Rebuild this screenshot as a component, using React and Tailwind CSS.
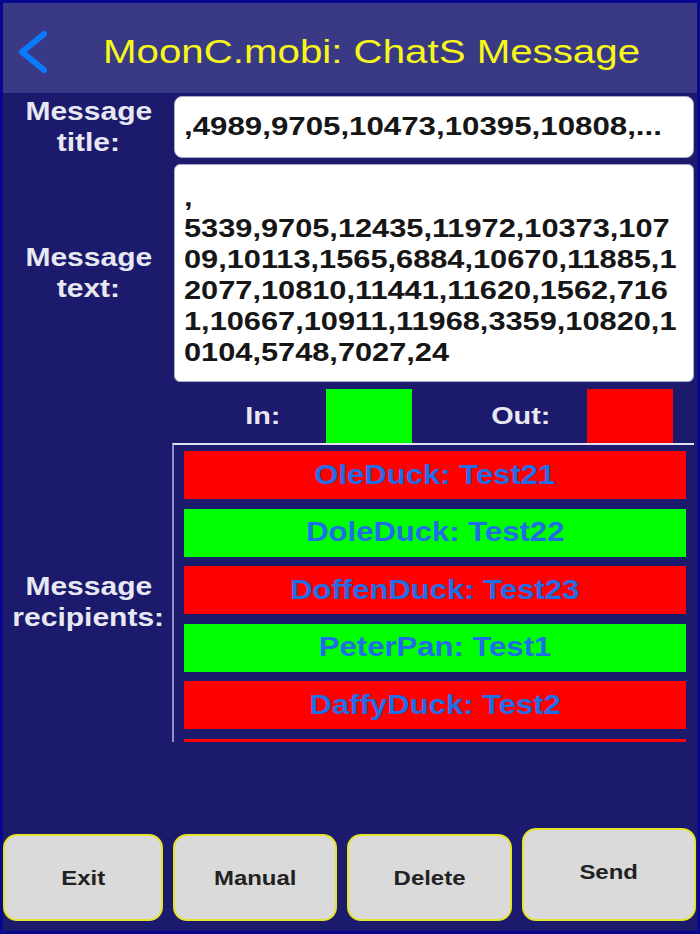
import React from 'react';

const MESSAGE_LINES = [
    ',',
    '5339,9705,12435,11972,10373,107',
    '09,10113,1565,6884,10670,11885,1',
    '2077,10810,11441,11620,1562,716',
    '1,10667,10911,11968,3359,10820,1',
    '0104,5748,7027,24',
];

const RECIPIENTS = [
    { name: 'OleDuck: Test21', out: true },
    { name: 'DoleDuck: Test22', out: false },
    { name: 'DoffenDuck: Test23', out: true },
    { name: 'PeterPan: Test1', out: false },
    { name: 'DaffyDuck: Test2', out: true },
    { name: 'MickeyMouse: Test3', out: true },
];

const BUTTONS = [
    { label: 'Exit', width: 'w-[160px]', height: 'h-[87px]' },
    { label: 'Manual', width: 'w-[164px]', height: 'h-[87px]' },
    { label: 'Delete', width: 'w-[165px]', height: 'h-[87px]' },
    { label: 'Send', width: 'w-[174px]', height: 'h-[93px] pb-[6px]' },
];

// the app was drawn on a narrow phone screen, so type reads a bit wide
const Label = ({ lines, className = '' }) => (
    <div className={`w-[171px] shrink-0 flex flex-col items-center justify-center text-[25px] leading-[31px] font-bold text-[#e8e8f2] text-center ${className}`}>
        {lines.map((l) => (
            <span key={l} className="block scale-x-[1.2] whitespace-nowrap">{l}</span>
        ))}
    </div>
);

const App = () => {
    return (
        <div
            className="w-[700px] h-[934px] flex flex-col bg-[#1b1a6c] border-[3px] border-[#08088e] overflow-hidden"
            style={{ fontFamily: '"Liberation Sans", Arial, sans-serif' }}
        >
            {/* nav bar */}
            <header className="h-[90px] shrink-0 bg-[#3a3985] flex items-center pl-[13px] pt-[8px]">
                <svg width="34" height="46" viewBox="0 0 34 46" className="shrink-0">
                    <polyline points="28,5 6,23 28,41" fill="none" stroke="#0a7bff" strokeWidth="6" strokeLinecap="round" strokeLinejoin="round" />
                </svg>
                <h1 className="ml-[53px] text-[33px] text-[#f7f71a] whitespace-nowrap inline-block scale-x-[1.22] origin-left">
                    MoonC.mobi: ChatS Message
                </h1>
            </header>

            <main className="flex flex-col pt-[3px] pr-[3px]">
                <div className="flex h-[62px]">
                    <Label lines={['Message', 'title:']} />
                    <div className="flex-1 bg-white rounded-[8px] border border-[#a9a9c0] flex items-center pl-[9px] overflow-hidden">
                        <span className="block text-[25px] font-bold text-[#161616] whitespace-nowrap scale-x-[1.25] origin-left">
                            ,4989,9705,10473,10395,10808,...
                        </span>
                    </div>
                </div>

                <div className="flex h-[218px] mt-[6px]">
                    <Label lines={['Message', 'text:']} />
                    <div className="flex-1 bg-white rounded-[6px] border border-[#a9a9c0] pt-[17px] pl-[9px] text-[25px] leading-[31px] font-bold text-[#161616] overflow-hidden">
                        {MESSAGE_LINES.map((line, i) => (
                            <div key={i} className="whitespace-nowrap scale-x-[1.23] origin-left">{line}</div>
                        ))}
                    </div>
                </div>

                <div className="flex h-[54px] mt-[7px] pl-[171px] text-[24px] font-bold text-[#e8e8f2]">
                    <div className="w-[152px] flex items-center justify-end pr-[46px]">
                        <span className="block scale-x-[1.2] origin-right">In:</span>
                    </div>
                    <div className="w-[86px] bg-[#00ff00]" />
                    <div className="w-[175px] flex items-center justify-end pr-[37px]">
                        <span className="block scale-x-[1.2] origin-right">Out:</span>
                    </div>
                    <div className="w-[86px] bg-[#ff0000]" />
                </div>

                <div className="flex h-[299px]">
                    <Label lines={['Message', 'recipients:']} className="pt-[18px]" />
                    <div className="flex-1 -ml-[2px] border-t-2 border-l-2 border-t-[#e2e2f2] border-l-[#9090c4] pl-[10px] pr-[8px] pt-[6px] flex flex-col gap-[9.5px] overflow-hidden">
                        {RECIPIENTS.map((r) => (
                            <div
                                key={r.name}
                                className={`h-[48px] shrink-0 flex items-center justify-center text-[27px] font-bold text-[#1f6ee8] ${r.out ? 'bg-[#ff0000]' : 'bg-[#00ff00]'}`}
                            >
                                <span className="block scale-x-[1.15] whitespace-nowrap">{r.name}</span>
                            </div>
                        ))}
                    </div>
                </div>
            </main>

            <div className="flex-1" />

            {/* toolbar */}
            <footer className="flex items-end gap-[10px] pr-[2px] pb-[10px]">
                {BUTTONS.map((b) => (
                    <button
                        key={b.label}
                        type="button"
                        className={`${b.width} ${b.height} shrink-0 flex items-center justify-center bg-[#dadada] border-2 border-[#e4e42a] rounded-[14px] text-[21px] font-bold text-[#222]`}
                    >
                        <span className="block scale-x-[1.14]">{b.label}</span>
                    </button>
                ))}
            </footer>
        </div>
    );
};

export default App;
